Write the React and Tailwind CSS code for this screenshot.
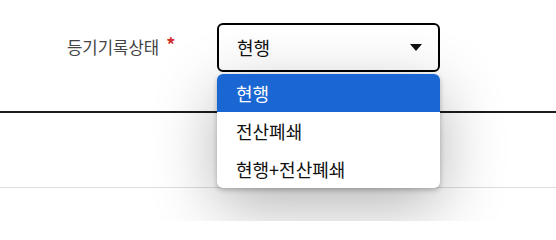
import { useState } from 'react'

var options = ['현행', '전산폐쇄', '현행+전산폐쇄']

function App() {
  var [value, setValue] = useState('현행')
  var [active, setActive] = useState(0)

  return (
    <div className="relative w-[556px] h-[221px] bg-white overflow-hidden" style={{ fontFamily: '"Noto Sans CJK KR", "Noto Sans", sans-serif' }}>
      <div className="h-[111px] flex items-start pt-[23px]">
        <div className="w-[217px] h-[49px] flex items-center pl-[67px] text-[16.7px] text-[#444]">
          등기기록상태 <span className="ml-[7px] text-[#d32f2f] text-[18px] font-bold -mt-[6px]">*</span>
        </div>
        <div className="relative w-[223px]">
          <div className="h-[49px] rounded-[6px] border-2 border-black bg-white flex items-center justify-between pl-[18px] pr-[16px] text-[18px] text-[#111]">
            <span>{value}</span>
            <svg width="12" height="7" viewBox="0 0 12 7"><path d="M0 0h12L6 7z" fill="#111" /></svg>
          </div>
          <ul className="absolute left-0 top-[51px] w-full bg-white rounded-[6px] overflow-hidden shadow-[0_18px_64px_rgba(0,0,0,0.3),0_2px_5px_rgba(0,0,0,0.25)] z-10">
            {options.map(function(opt, i) {
              return (
                <li
                  key={opt}
                  onMouseEnter={function() { setActive(i) }}
                  onClick={function() { setValue(opt) }}
                  className={'h-[38px] flex items-center pl-[19px] text-[18px] cursor-pointer ' + (i === active ? 'bg-[#1a66d2] text-white' : 'text-[#111]')}
                >
                  {opt}
                </li>
              )
            })}
          </ul>
        </div>
      </div>
      <div className="h-[2px] bg-[#1c1c1c]" />
      <div className="h-[75px] border-b border-[#dddddd]" />
    </div>
  )
}

export default App
